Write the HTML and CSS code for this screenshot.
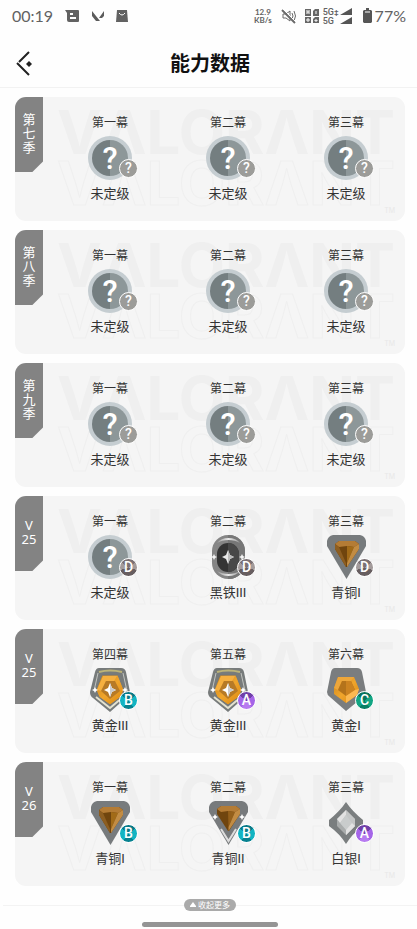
FILE: index.html
```html
<!DOCTYPE html>
<html lang="zh-CN">
<head>
    <meta charset="UTF-8">
    <meta name="viewport" content="width=device-width, initial-scale=1.0">
    <title>能力数据</title>
    <link rel="stylesheet" href="styles.css">
</head>
<body>

    <!-- Rank icons -->
    <svg class="sprite" width="0" height="0" aria-hidden="true">
        <defs>
            <linearGradient id="gold" x1="0" y1="0" x2="1" y2="1">
                <stop offset="0" stop-color="#c9841c"/>
                <stop offset="0.5" stop-color="#f0a52c"/>
                <stop offset="1" stop-color="#d9860f"/>
            </linearGradient>
            <linearGradient id="shine" x1="0" y1="0" x2="1" y2="0">
                <stop offset="0" stop-color="#9a9a9a"/>
                <stop offset="0.5" stop-color="#e8e8e8"/>
                <stop offset="1" stop-color="#9a9a9a"/>
            </linearGradient>
        </defs>
        <symbol id="unranked" viewBox="0 0 46 46">
            <circle cx="23" cy="23" r="22" fill="#c5cdd1"/>
            <path d="M23 5a18 18 0 0 0 0 36z" fill="#747e80"/>
            <path d="M23 5a18 18 0 0 1 0 36z" fill="#8d9799"/>
            <text class="mark" x="23" y="34" text-anchor="middle">?</text>
        </symbol>
        <symbol id="iron3" viewBox="0 0 46 46">
            <rect x="7" y="1" width="33" height="44" rx="16" fill="#858585"/>
            <path d="M23 1h1a16 16 0 0 1 16 16v12a16 16 0 0 1-16 16h-1z" fill="#777"/>
            <path d="M12 9q4-5 11.500-5t11.500 5q-5-3-11.500-3t-11.500 3zM12 37q4 5 11.500 5t11.500-5q-5 3-11.500 3t-11.500-3z" fill="url(#shine)"/>
            <rect x="12" y="9" width="22" height="29" rx="11" fill="#343434"/>
            <path d="M23 9a11 11 0 0 1 11 11v7a11 11 0 0 1-11 11z" fill="#484848"/>
            <path d="M23 16l2 5 4 2-4 2-2 5-2-5-4-2 4-2z" fill="#e8e8e8"/>
            <path d="M23 16l2 5 4 2-4 2-2 5z" fill="#bbb"/>
            <path d="M9 20l1 2 2 1-2 1-1 2-1-2-2-1 2-1zM37 20l1 2 2 1-2 1-1 2-1-2-2-1 2-1z" fill="#f4f4f4"/>
        </symbol>
        <symbol id="bronze1" viewBox="0 0 46 46">
            <path d="M10 1h27q5 1 6 6v5L23.500 45 4 12V7q1-5 6-6z" fill="#777b7d"/>
            <path d="M12 10l4-3h16l4 3v5L24 33h-1L12 15z" fill="#70450e"/>
            <path d="M12 10l4-3h16l4 3-5 3-7-1-8 1z" fill="#b47c35"/>
            <path d="M24 12l7 1-7 16z" fill="#a26b18"/>
            <path d="M36 10v5L24 33v-4l7-16z" fill="#c28c43"/>
            <path d="M12 10l4 3 7 16v4L12 15z" fill="#8d5e21"/>
        </symbol>
        <symbol id="bronze2" viewBox="0 0 46 46">
            <path d="M10 1h27q5 1 6 6v5L23.500 45 4 12V7q1-5 6-6z" fill="#777a7c"/>
            <path d="M13 4h21" stroke="url(#shine)" stroke-width="2"/>
            <path d="M16 29l7.500 12L31 29" fill="none" stroke="#ddd" stroke-width="2"/>
            <path d="M12 9l4-3h15l4 3v5L24 31h-1L12 14z" fill="#70450e"/>
            <path d="M12 9l4-3h15l4 3-5 3-7-1-7 1z" fill="#b47c35"/>
            <path d="M23 11l7 1-6.500 15z" fill="#94601b"/>
            <path d="M35 9v5L23.500 31v-4L30 12z" fill="#c28c43"/>
            <path d="M10 14l1 2 2 1-2 1-1 2-1-2-2-1 2-1zM37 14l1 2 2 1-2 1-1 2-1-2-2-1 2-1z" fill="#fff"/>
        </symbol>
        <symbol id="silver1" viewBox="0 0 46 46">
            <path d="M23 2q6 9 17 18v6q-11 8-17 18-6-10-17-18v-6Q17 11 23 2z" fill="#7a7e7f"/>
            <path d="M23 10l9 9v7l-9 9-9-9v-7z" fill="#a9acac"/>
            <path d="M23 10l9 9v7l-9 9z" fill="#c4c6c6"/>
            <path d="M23 15l6 8-6 7-6-7z" fill="#c9cccc"/>
            <path d="M23 10v5l-6 8-3-4zM23 30l6-7 3 3-9 9z" fill="#e2e2e2"/>
        </symbol>
        <symbol id="gold1" viewBox="0 0 46 46">
            <path d="M12 1h22q4 0 5 4l4 20q0 3-3 5L23 44 7 30q-3-2-3-5L8 5q1-4 4-4z" fill="#7a7d7f"/>
            <path d="M15 10h16l5 12-2 6-11 8-12-9V21z" fill="url(#gold)"/>
            <path d="M15 10h16l-3 4h-9l-4 9-4-2z" fill="#eda63a"/>
            <path d="M19 14h9l4 9-9 6-8-6z" fill="#b4731b"/>
            <path d="M23 14h5l4 9-9 6z" fill="#cc8321"/>
            <path d="M23 29l9-6 4-1-2 6-11 8z" fill="#fbb851"/>
        </symbol>
        <symbol id="gold3" viewBox="0 0 46 46">
            <path d="M12 1h22q4 0 5 4l4 20q0 3-3 5L23 45 6 31q-3-2-3-6L8 5q1-4 4-4z" fill="#777b7b"/>
            <path d="M12 5q11-3 23 0" fill="none" stroke="#bdb478" stroke-width="2"/>
            <path d="M11 6L7 24M36 6l4 18" fill="none" stroke="#c2c4c0"/>
            <path d="M9 30l14 11 13-11" fill="none" stroke="#e4e2d0" stroke-width="2"/>
            <path d="M15 8h16l6 15-3 7-11 8-11-8-3-7z" fill="url(#gold)" stroke="#74797a"/>
            <path d="M16 9h14l-3 5h-8l-4 10-5-1z" fill="#f6b040"/>
            <path d="M19 14h9l5 10-10 8-9-8z" fill="#b77a26"/>
            <path d="M23 16l2 5 4 2-4 2-2 5-2-5-4-2 4-2z" fill="#fff"/>
            <path d="M23 16l2 5 4 2-4 2-2 5z" fill="#ccc"/>
            <path d="M8 20l1 2 2 1-2 1-1 2-1-2-2-1 2-1zM38 20l1 2 2 1-2 1-1 2-1-2-2-1 2-1z" fill="#fff"/>
        </symbol>
    </svg>

    <!-- Status bar -->
    <div class="status">
        <span class="clock">00:19</span>
        <div class="notices">
            <svg width="15" height="14" viewBox="0 0 15 14"><path d="M0 1h13q1 0 1 1v10q0 1-1 1H4q-2 0-2-2V4z" fill="#626262"/><path d="M5 5h3M5 9h6" stroke="#fff" stroke-width="2"/></svg>
            <svg width="14" height="14" viewBox="0 0 14 14"><path d="M1 2l8 10H5L1 7zM13 2v5l-2 2H8z" fill="#5c5c5c"/></svg>
            <svg width="12" height="14" viewBox="0 0 12 14"><path d="M1 1h10l1 12H0z" fill="#626262"/><path d="M3 4q3 4 6 0" fill="none" stroke="#fff" stroke-width="1"/></svg>
        </div>
        <div class="signals">
            <span class="speed">12.9<br>KB/s</span>
            <svg width="16" height="16" viewBox="0 0 16 16" fill="none" stroke="#6a6a6a"><path d="M2 6h3l4-3v10L5 10H2z" stroke-width="1"/><path d="M11 5q2 3 0 6M13 3q3 5 0 10" /><path d="M1 2l13 13" stroke-width="2"/><path d="M2 1l13 13" stroke="#fff"/></svg>
            <svg width="16" height="16" viewBox="0 0 16 16"><path d="M1 1h6v7H1zM9 3l2-2h4v7H9zM1 9h6v6H1zM9 11l2-2h4v6H9z" fill="#676767"/><path d="M3 2v4M5 2v4M3 4h2M3 11h2v2H3zM12 3v3M11 12h2v1h-2z" fill="none" stroke="#fff"/></svg>
            <span class="network">5G<small>‡</small><br>5G</span>
            <svg width="14" height="18" viewBox="0 0 14 18"><path d="M1 8l12-7v7zM1 17l12-7v7z" fill="#555"/></svg>
            <svg class="battery" width="9" height="16" viewBox="0 0 9 16"><path d="M3 0h3v2h2l1 1v11l-1 1H1l-1-1V3l1-1h2z" fill="#555"/><path d="M2 4h5" stroke="#fff" stroke-width="1"/></svg>
            <span class="percent">77%</span>
        </div>
    </div>

    <header class="header">
        <a class="back" href="#" aria-label="返回">
            <svg width="18" height="26" viewBox="0 0 18 26"><path d="M13 1L3 11M1 12l12 12" fill="none" stroke="#222" stroke-width="2"/><path d="M13 10l3 3-3 3-3-3z" fill="#222"/></svg>
        </a>
        <h1>能力数据</h1>
    </header>

    <main class="seasons">
        <section class="card">
            <div class="watermark" aria-hidden="true"><b>VΛLORΛNT</b><i>VΛLORΛNT</i><small>TM</small></div>
            <h2 class="season">第<br>七<br>季</h2>
            <div class="acts">
                <div class="act"><h3>第一幕</h3><div class="rank"><svg><use href="#unranked"/></svg><span class="badge none">?</span></div><p>未定级</p></div>
                <div class="act"><h3>第二幕</h3><div class="rank"><svg><use href="#unranked"/></svg><span class="badge none">?</span></div><p>未定级</p></div>
                <div class="act"><h3>第三幕</h3><div class="rank"><svg><use href="#unranked"/></svg><span class="badge none">?</span></div><p>未定级</p></div>
            </div>
        </section>

        <section class="card">
            <div class="watermark" aria-hidden="true"><b>VΛLORΛNT</b><i>VΛLORΛNT</i><small>TM</small></div>
            <h2 class="season">第<br>八<br>季</h2>
            <div class="acts">
                <div class="act"><h3>第一幕</h3><div class="rank"><svg><use href="#unranked"/></svg><span class="badge none">?</span></div><p>未定级</p></div>
                <div class="act"><h3>第二幕</h3><div class="rank"><svg><use href="#unranked"/></svg><span class="badge none">?</span></div><p>未定级</p></div>
                <div class="act"><h3>第三幕</h3><div class="rank"><svg><use href="#unranked"/></svg><span class="badge none">?</span></div><p>未定级</p></div>
            </div>
        </section>

        <section class="card">
            <div class="watermark" aria-hidden="true"><b>VΛLORΛNT</b><i>VΛLORΛNT</i><small>TM</small></div>
            <h2 class="season">第<br>九<br>季</h2>
            <div class="acts">
                <div class="act"><h3>第一幕</h3><div class="rank"><svg><use href="#unranked"/></svg><span class="badge none">?</span></div><p>未定级</p></div>
                <div class="act"><h3>第二幕</h3><div class="rank"><svg><use href="#unranked"/></svg><span class="badge none">?</span></div><p>未定级</p></div>
                <div class="act"><h3>第三幕</h3><div class="rank"><svg><use href="#unranked"/></svg><span class="badge none">?</span></div><p>未定级</p></div>
            </div>
        </section>

        <section class="card">
            <div class="watermark" aria-hidden="true"><b>VΛLORΛNT</b><i>VΛLORΛNT</i><small>TM</small></div>
            <h2 class="season">V<br>25</h2>
            <div class="acts">
                <div class="act"><h3>第一幕</h3><div class="rank"><svg><use href="#unranked"/></svg><span class="badge d">D</span></div><p>未定级</p></div>
                <div class="act"><h3>第二幕</h3><div class="rank"><svg><use href="#iron3"/></svg><span class="badge d">D</span></div><p>黑铁III</p></div>
                <div class="act"><h3>第三幕</h3><div class="rank"><svg><use href="#bronze1"/></svg><span class="badge d">D</span></div><p>青铜I</p></div>
            </div>
        </section>

        <section class="card">
            <div class="watermark" aria-hidden="true"><b>VΛLORΛNT</b><i>VΛLORΛNT</i><small>TM</small></div>
            <h2 class="season">V<br>25</h2>
            <div class="acts">
                <div class="act"><h3>第四幕</h3><div class="rank"><svg><use href="#gold3"/></svg><span class="badge b">B</span></div><p>黄金III</p></div>
                <div class="act"><h3>第五幕</h3><div class="rank"><svg><use href="#gold3"/></svg><span class="badge a">A</span></div><p>黄金III</p></div>
                <div class="act"><h3>第六幕</h3><div class="rank"><svg><use href="#gold1"/></svg><span class="badge c">C</span></div><p>黄金I</p></div>
            </div>
        </section>

        <section class="card">
            <div class="watermark" aria-hidden="true"><b>VΛLORΛNT</b><i>VΛLORΛNT</i><small>TM</small></div>
            <h2 class="season">V<br>26</h2>
            <div class="acts">
                <div class="act"><h3>第一幕</h3><div class="rank"><svg><use href="#bronze1"/></svg><span class="badge b">B</span></div><p>青铜I</p></div>
                <div class="act"><h3>第二幕</h3><div class="rank"><svg><use href="#bronze2"/></svg><span class="badge b">B</span></div><p>青铜II</p></div>
                <div class="act"><h3>第三幕</h3><div class="rank"><svg><use href="#silver1"/></svg><span class="badge a">A</span></div><p>白银I</p></div>
            </div>
        </section>
    </main>

    <footer class="footer">
        <div class="more">
            <button type="button"><svg width="6" height="6" viewBox="0 0 6 6"><path d="M3 0l3 4v1H0V4z" fill="#fff"/></svg>收起更多</button>
        </div>
        <div class="home-bar"></div>
    </footer>

</body>
</html>
```

FILE: styles.css
```css
* {
    margin: 0;
    padding: 0;
    box-sizing: border-box;
}

body {
    font-family: "Noto Sans", "Noto Sans CJK SC", sans-serif;
    background-color: #fefefe;
    color: #333;
}

svg {
    display: block;
}

.sprite {
    position: absolute;
}

.mark {
    font: 500 31px Roboto, sans-serif;
    fill: #fff;
}

/* Status bar */
.status {
    display: flex;
    align-items: center;
    height: 32px;
    padding: 0 11px 0 12px;
    color: #626262;
}

.clock, .percent {
    font-family: Lato, sans-serif;
    font-size: 16px;
    line-height: 20px;
}

.notices {
    display: flex;
    gap: 11px;
    margin-left: 12px;
}

.signals {
    display: flex;
    align-items: center;
    margin-left: auto;
}

.speed, .network {
    font-family: Roboto, sans-serif;
    font-size: 9px;
    font-weight: 500;
    line-height: 8px;
}

.speed {
    margin-right: 9px;
    font-family: Lato, sans-serif;
    font-size: 8px;
    font-weight: 700;
    text-align: center;
}

.network {
    margin-left: 3px;
    white-space: nowrap;
}

.network small {
    font-size: 8px;
}

.signals svg + svg {
    margin-left: 7px;
}

.signals .battery {
    margin-left: 10px;
    margin-right: 3px;
}

/* Title bar */
.header {
    display: grid;
    grid-template-columns: 48px 1fr 48px;
    align-items: center;
    height: 56px;
    padding: 8px 0 0 3px;
    border-bottom: 1px solid #f2f2f2;
}

.back {
    padding-left: 13px;
}

.header h1 {
    font-size: 20px;
    line-height: 28px;
    font-weight: 700;
    color: #111;
    text-align: center;
}

/* Season cards */
.seasons {
    display: flex;
    flex-direction: column;
    gap: 9px;
    padding: 9px 12px 0 15px;
}

.card {
    position: relative;
    display: flex;
    align-items: flex-start;
    gap: 8px;
    height: 124px;
    border-radius: 11px;
    background-color: #f5f5f5;
    overflow: hidden;
}

.watermark {
    position: absolute;
    top: 10px;
    right: 10px;
    font-family: Inter, sans-serif;
    font-size: 60px;
    line-height: 51px;
    color: #efefef;
}

.watermark b, .watermark i {
    display: block;
    font-weight: 700;
    font-style: normal;
}

.watermark i {
    color: #f5f5f5;
    -webkit-text-stroke: 1px #efefef;
}

.watermark small {
    display: block;
    font-size: 7px;
    line-height: 4px;
    color: #e8e8e8;
    text-align: right;
}

.season {
    position: relative;
    display: flex;
    align-items: center;
    justify-content: center;
    width: 28px;
    height: 75px;
    padding-bottom: 4px;
    background-color: #838383;
    clip-path: polygon(0 0, 100% 0, 100% 86%, 62% 100%, 0 100%);
    color: #fff;
    font-size: 13px;
    font-weight: 400;
    line-height: 14px;
    text-align: center;
}

.acts {
    position: relative;
    flex: 1;
    display: grid;
    grid-template-columns: repeat(3, 1fr);
    padding-top: 18px;
}

.act {
    display: flex;
    flex-direction: column;
    align-items: center;
}

.act h3 {
    font-size: 12px;
    font-weight: 400;
    line-height: 16px;
}

.rank {
    position: relative;
    margin-top: 4px;
}

.rank svg {
    width: 46px;
    height: 46px;
}

.act p {
    margin-top: 4px;
    font-family: Roboto, "Noto Sans CJK SC", sans-serif;
    font-size: 13px;
    line-height: 18px;
}

/* Small letter over the rank icon */
.badge {
    position: absolute;
    right: -5px;
    bottom: 3px;
    width: 19px;
    height: 19px;
    border: 1px solid #fff;
    border-radius: 50%;
    color: #fff;
    font-family: Roboto, sans-serif;
    font-size: 14px;
    font-weight: 500;
    line-height: 17px;
    text-align: center;
}

.badge.none {
    background-color: #9c9c99;
}

.badge.d {
    background: conic-gradient(#7b7174 15%, #a39b9b 0 30%, #675e60 0 70%, #a39b9b 0 85%, #7b7174 0);
}

.badge.b {
    background: conic-gradient(#087a88 15%, #12b4c2 0 40%, #078290 0 60%, #12b4c2 0 85%, #087a88 0);
}

.badge.a {
    background: conic-gradient(#7040a8 15%, #a565e8 0 40%, #b77bf0 0 60%, #a565e8 0 85%, #7040a8 0);
}

.badge.c {
    background: conic-gradient(#08735c 15%, #12a583 0 40%, #087e65 0 60%, #12a583 0 85%, #08735c 0);
}

/* Bottom */
.footer {
    padding: 13px 0 2px 3px;
}

.more {
    display: flex;
    align-items: center;
}

.more::before, .more::after {
    content: "";
    flex: 1;
    height: 1px;
    background-color: #f3f3f3;
}

.more button {
    display: flex;
    align-items: center;
    gap: 2px;
    height: 12px;
    padding: 0 6px;
    border: none;
    border-radius: 6px;
    background-color: #aaa;
    color: #fff;
    font-family: inherit;
    font-size: 8px;
    line-height: 12px;
}

.home-bar {
    width: 33%;
    height: 5px;
    margin: 11px auto 0;
    border-radius: 3px;
    background-color: #949494;
}
```
